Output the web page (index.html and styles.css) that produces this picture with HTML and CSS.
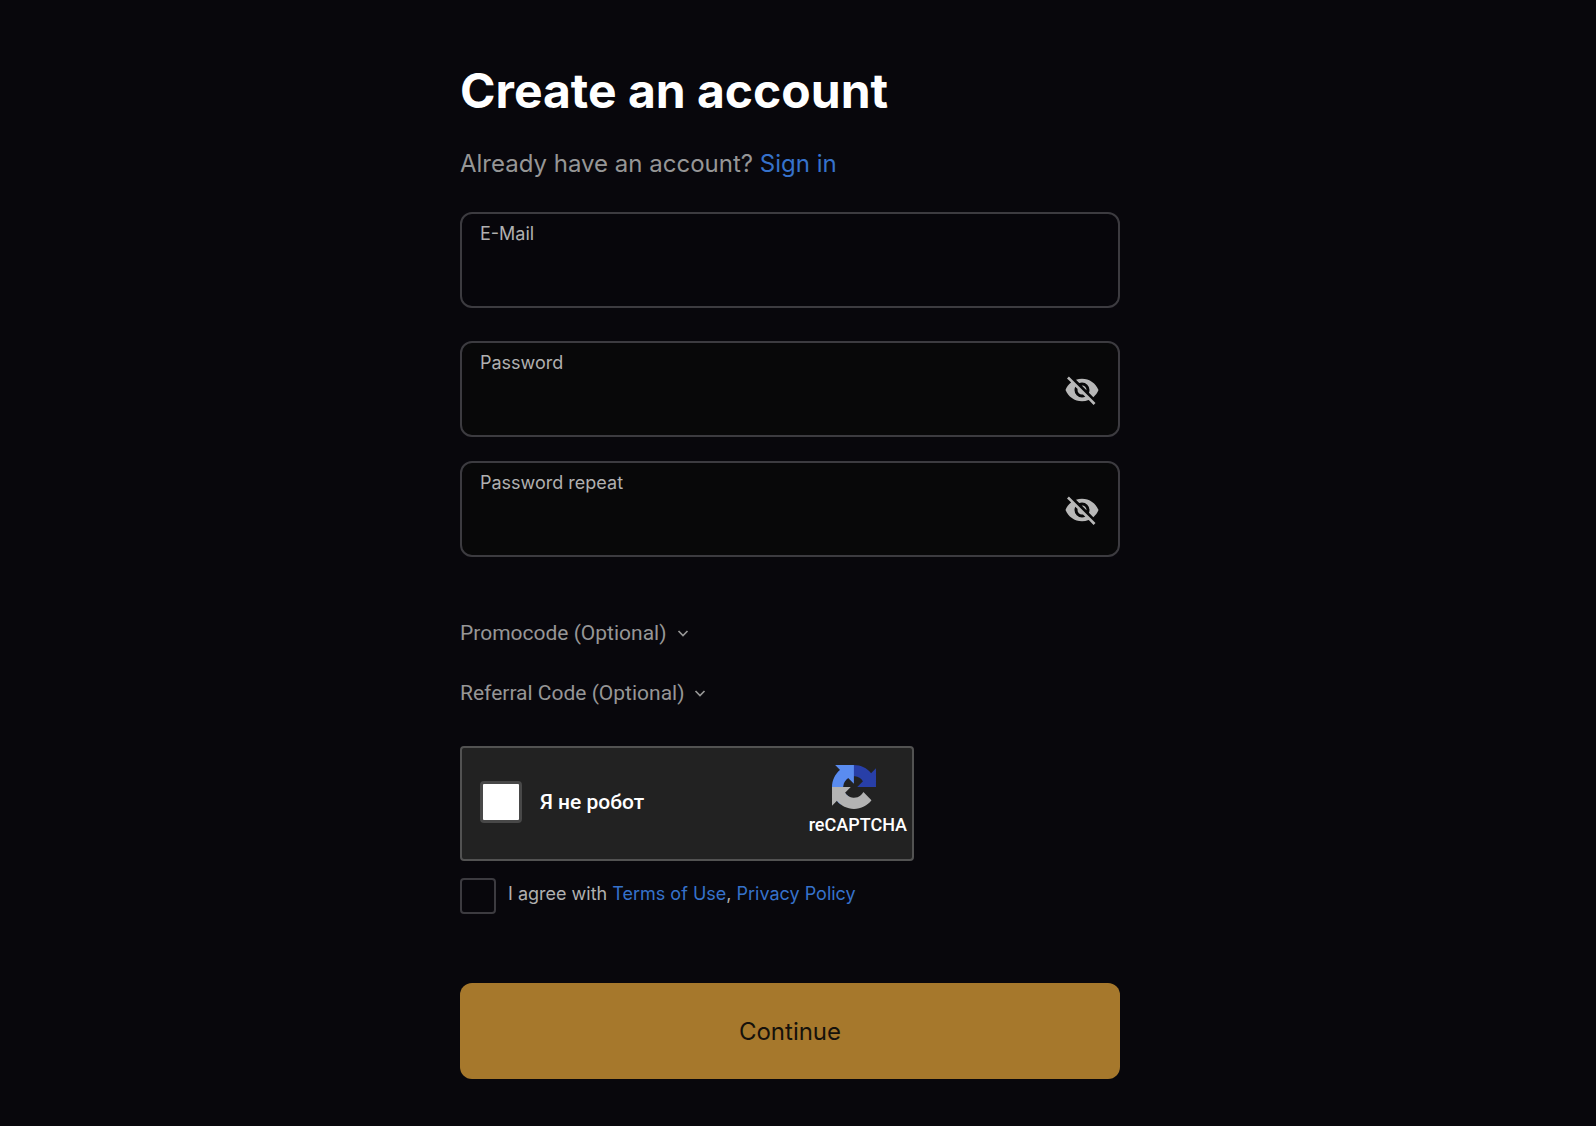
FILE: index.html
```html
<!DOCTYPE html>
<html lang="en">
<head>
    <meta charset="UTF-8">
    <meta name="viewport" content="width=device-width, initial-scale=1.0">
    <title>Create an account</title>
    <link rel="stylesheet" href="styles.css">
</head>
<body>
    <main class="container">
        <h1>Create an account</h1>
        <p class="signin">Already have an account? <a href="#">Sign in</a></p>

        <form id="registerForm">
            <div class="field field-email">
                <label for="email">E-Mail</label>
                <input type="email" id="email" name="email" required>
            </div>
            <div class="field field-password">
                <label for="password">Password</label>
                <input type="password" id="password" name="password" required>
                <button type="button" class="eye" aria-label="Show password">
                    <svg viewBox="0 0 24 24" width="36" height="36"><path fill="currentColor" d="M11.83 9L15 12.16V12a3 3 0 0 0-3-3h-.17m-4.3.8l1.55 1.55c-.05.21-.08.42-.08.65a3 3 0 0 0 3 3c.22 0 .44-.03.65-.08l1.55 1.55c-.67.33-1.41.53-2.2.53a5 5 0 0 1-5-5c0-.79.2-1.53.53-2.2M2 4.27l2.28 2.28.45.45C3.08 8.3 1.78 10 1 12c1.73 4.39 6 7.5 11 7.5 1.55 0 3.03-.3 4.38-.84l.43.42L19.73 22 21 20.73 3.27 3M12 7a5 5 0 0 1 5 5c0 .64-.13 1.26-.36 1.82l2.93 2.93c1.5-1.25 2.7-2.89 3.43-4.75-1.73-4.39-6-7.5-11-7.5-1.4 0-2.74.25-4 .7l2.17 2.15C10.74 7.13 11.35 7 12 7z"/></svg>
                </button>
            </div>
            <div class="field field-password">
                <label for="passwordRepeat">Password repeat</label>
                <input type="password" id="passwordRepeat" name="passwordRepeat" required>
                <button type="button" class="eye" aria-label="Show password">
                    <svg viewBox="0 0 24 24" width="36" height="36"><path fill="currentColor" d="M11.83 9L15 12.16V12a3 3 0 0 0-3-3h-.17m-4.3.8l1.55 1.55c-.05.21-.08.42-.08.65a3 3 0 0 0 3 3c.22 0 .44-.03.65-.08l1.55 1.55c-.67.33-1.41.53-2.2.53a5 5 0 0 1-5-5c0-.79.2-1.53.53-2.2M2 4.27l2.28 2.28.45.45C3.08 8.3 1.78 10 1 12c1.73 4.39 6 7.5 11 7.5 1.55 0 3.03-.3 4.38-.84l.43.42L19.73 22 21 20.73 3.27 3M12 7a5 5 0 0 1 5 5c0 .64-.13 1.26-.36 1.82l2.93 2.93c1.5-1.25 2.7-2.89 3.43-4.75-1.73-4.39-6-7.5-11-7.5-1.4 0-2.74.25-4 .7l2.17 2.15C10.74 7.13 11.35 7 12 7z"/></svg>
                </button>
            </div>

            <div class="optional">
                <button type="button" class="toggle">Promocode (Optional)
                    <svg viewBox="0 0 12 10" width="12" height="10"><path d="M1.500 3 6 7.500l4.500-4.500" fill="none" stroke="currentColor" stroke-width="1.700"/></svg>
                </button>
                <button type="button" class="toggle">Referral Code (Optional)
                    <svg viewBox="0 0 12 10" width="12" height="10"><path d="M1.500 3 6 7.500l4.500-4.500" fill="none" stroke="currentColor" stroke-width="1.700"/></svg>
                </button>
            </div>

            <div class="captcha">
                <input type="checkbox" id="robot" name="robot">
                <label for="robot" lang="ru">Я не робот</label>
                <div class="captcha-brand">
                    <svg viewBox="0 0 64 64" width="44" height="44">
                        <path fill="#283fa8" d="M64 31.955l-.033-1.37V4.687l-7.16 7.16C50.948 4.674 42.033.093 32.05.093c-10.4 0-19.622 4.96-25.458 12.64l11.736 11.86a15.55 15.55 0 0 1 4.754-5.334c2.05-1.6 4.952-2.906 8.968-2.906.485 0 .86.057 1.135.163 4.976.393 9.288 3.14 11.828 7.124l-8.307 8.307L64 31.953"/>
                        <path fill="#5a8cf0" d="M31.862.094l-1.37.033H4.594l7.16 7.16C4.58 13.147 0 22.06 0 32.046c0 10.4 4.96 19.622 12.64 25.458L24.5 45.768a15.55 15.55 0 0 1-5.334-4.754c-1.6-2.05-2.906-4.952-2.906-8.968 0-.485.057-.86.163-1.135.393-4.976 3.14-9.288 7.124-11.828l8.307 8.307L31.86.095"/>
                        <path fill="#b3b3b3" d="M.001 32.045l.033 1.37v25.898l7.16-7.16c5.86 7.173 14.774 11.754 24.76 11.754 10.4 0 19.622-4.96 25.458-12.64l-11.736-11.86a15.55 15.55 0 0 1-4.754 5.334c-2.05 1.6-4.952 2.906-8.968 2.906-.485 0-.86-.057-1.135-.163-4.976-.393-9.288-3.14-11.828-7.124l8.307-8.307c-10.522.04-22.4.066-27.295-.005"/>
                    </svg>
                    <span>reCAPTCHA</span>
                </div>
            </div>

            <div class="agree">
                <input type="checkbox" id="agree" name="agree" required>
                <span><label for="agree">I agree with</label> <a href="#">Terms of Use</a>, <a href="#">Privacy Policy</a></span>
            </div>

            <button type="submit" class="btn">Continue</button>
        </form>
    </main>
</body>
</html>
```
FILE: styles.css
```css
* {
    margin: 0;
    padding: 0;
    box-sizing: border-box;
}

body {
    font-family: 'Inter', sans-serif;
    background: #08070c;
    color: #b0b0b0;
    min-height: 100vh;
    padding: 60px 16px 40px 0;
}

.container {
    max-width: 660px;
    margin: 0 auto;
}

h1 {
    color: #fff;
    font-size: 48px;
    font-weight: 700;
    line-height: 62px;
    margin-bottom: 26px;
}

a {
    color: #3672cb;
    text-decoration: none;
}

a:hover {
    text-decoration: underline;
}

button {
    font-family: inherit;
    border: none;
    background: none;
    cursor: pointer;
}

input[type="checkbox"] {
    appearance: none;
    flex-shrink: 0;
    cursor: pointer;
}

.signin {
    color: #969696;
    font-size: 24px;
    line-height: 32px;
    margin-bottom: 32px;
}

.field {
    position: relative;
    margin-bottom: 24px;
}

.field-email {
    margin-bottom: 33px;
}

.field label {
    position: absolute;
    top: 10px;
    left: 20px;
    font-size: 18px;
    line-height: 24px;
}

.field input {
    display: block;
    width: 100%;
    height: 96px;
    padding: 36px 20px 12px;
    border: 2px solid #3c3b40;
    border-radius: 12px;
    background: #07060b;
    color: #fff;
    font-family: inherit;
    font-size: 24px;
    outline: none;
}

.field-password input {
    padding-right: 68px;
    background: #080809;
}

.field input:focus {
    border-color: #a6782c;
}

.eye {
    position: absolute;
    top: 31px;
    right: 20px;
    height: 36px;
    color: #b8b8b8;
}

.optional {
    display: flex;
    flex-direction: column;
    align-items: flex-start;
    gap: 30px;
    margin: 61px 0 38px;
}

.toggle {
    display: flex;
    align-items: center;
    gap: 10px;
    color: #969696;
    font-family: 'Roboto', sans-serif;
    font-size: 21px;
    line-height: 30px;
}

.captcha {
    display: flex;
    align-items: center;
    max-width: 454px;
    height: 115px;
    padding: 0 5px 4px 18px;
    border: 2px solid #525252;
    border-radius: 4px;
    background: #222;
    color: #fff;
    font-family: 'Roboto', sans-serif;
    font-weight: 500;
}

.captcha input {
    width: 42px;
    height: 42px;
    margin-right: 18px;
    border: 3px solid #484848;
    border-radius: 4px;
    background: #fff;
}

.captcha input:checked {
    background: #5a8cf0;
}

.captcha label {
    flex: 1;
    font-size: 21px;
}

.captcha-brand {
    display: flex;
    flex-direction: column;
    align-items: center;
    gap: 4px;
    padding-bottom: 2px;
    font-size: 18px;
    line-height: 24px;
}

.captcha-brand svg {
    margin-right: 8px;
}

.agree {
    display: flex;
    gap: 12px;
    margin: 17px 0 69px;
    font-size: 18px;
    line-height: 32px;
}

.agree input {
    width: 36px;
    height: 36px;
    border: 2px solid #3c3b40;
    border-radius: 4px;
}

.agree input:checked {
    background: #a6782c;
}

.btn {
    display: block;
    width: 100%;
    height: 96px;
    border-radius: 12px;
    background: #a6782c;
    color: #15110b;
    font-size: 24px;
}

.btn:hover {
    background: #b98632;
}
```
